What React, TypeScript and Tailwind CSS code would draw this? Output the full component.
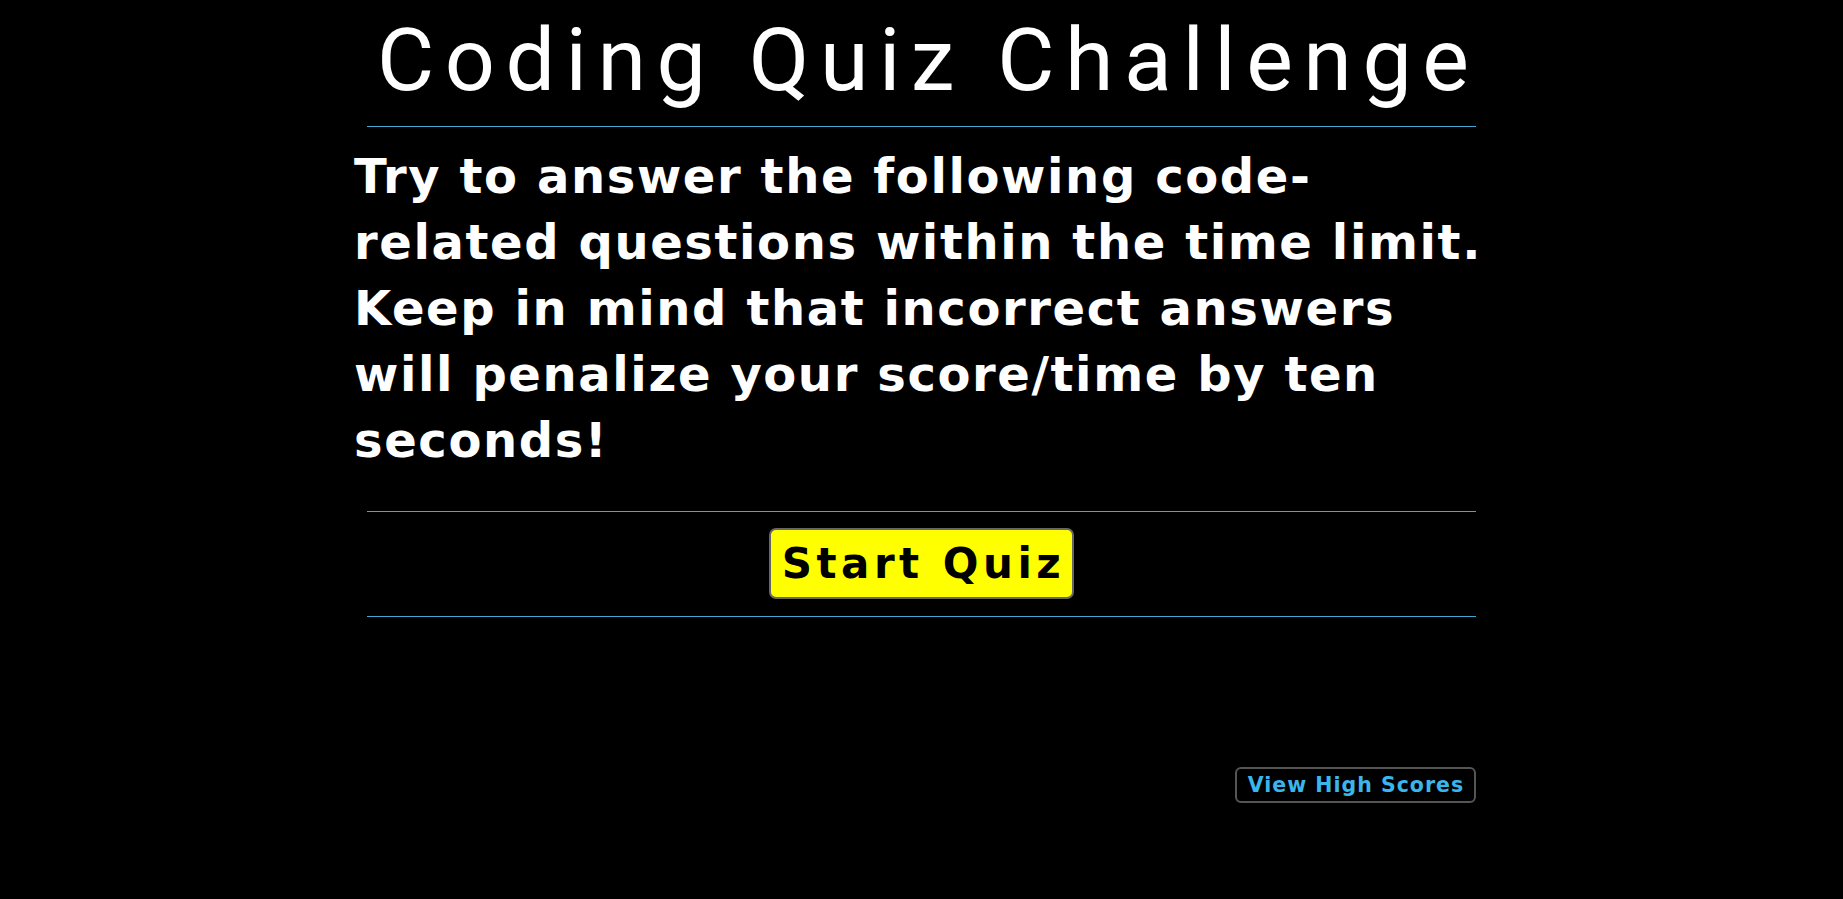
import React from "react";

export default function App() {
  const lines = [
    "Try to answer the following code-",
    "related questions within the time limit.",
    "Keep in mind that incorrect answers",
    "will penalize your score/time by ten",
    "seconds!",
  ];
  const body = { fontFamily: "'DejaVu Sans', 'Open Sans', sans-serif" };
  return (
    <div className="min-h-[899px] w-full bg-black text-white">
      <div className="mx-auto flex w-[1109px] flex-col pt-[10px]">
        <h1
          className="whitespace-nowrap pl-[10px] text-center text-[88px] font-normal leading-[100px] tracking-[10.5px] text-white"
          style={{ fontFamily: "Roboto, 'Noto Sans', sans-serif" }}
        >
          Coding Quiz Challenge
        </h1>
        <hr className="mt-[16px] border-0 border-t border-[#3fa8d6]" />
        <p
          className="-ml-[13px] mt-[16px] text-[48px] font-bold leading-[66px] tracking-[1.6px] text-white"
          style={body}
        >
          {lines.map((l) => (
            <span key={l} className="block whitespace-nowrap">
              {l}
            </span>
          ))}
        </p>
        <hr className="mt-[38px] border-0 border-t border-[#3fa8d6]" />
        <div className="flex justify-center pt-[16px] pb-[17px]">
          <button
            className="h-[71px] w-[305px] rounded-[7px] border-2 border-[#666666] bg-[#ffff00] pl-[4px] text-[42px] font-bold tracking-[4.5px] text-black"
            style={body}
          >
            Start Quiz
          </button>
        </div>
        <hr className="border-0 border-t border-[#3fa8d6]" />
        <div className="flex justify-end pt-[150px]">
          <button
            className="h-[36px] w-[241px] rounded-[6px] border-2 border-[#555555] bg-black pl-[1px] text-[20.5px] font-bold tracking-[1px] text-[#3bb6ec]"
            style={body}
          >
            View High Scores
          </button>
        </div>
      </div>
    </div>
  );
}
